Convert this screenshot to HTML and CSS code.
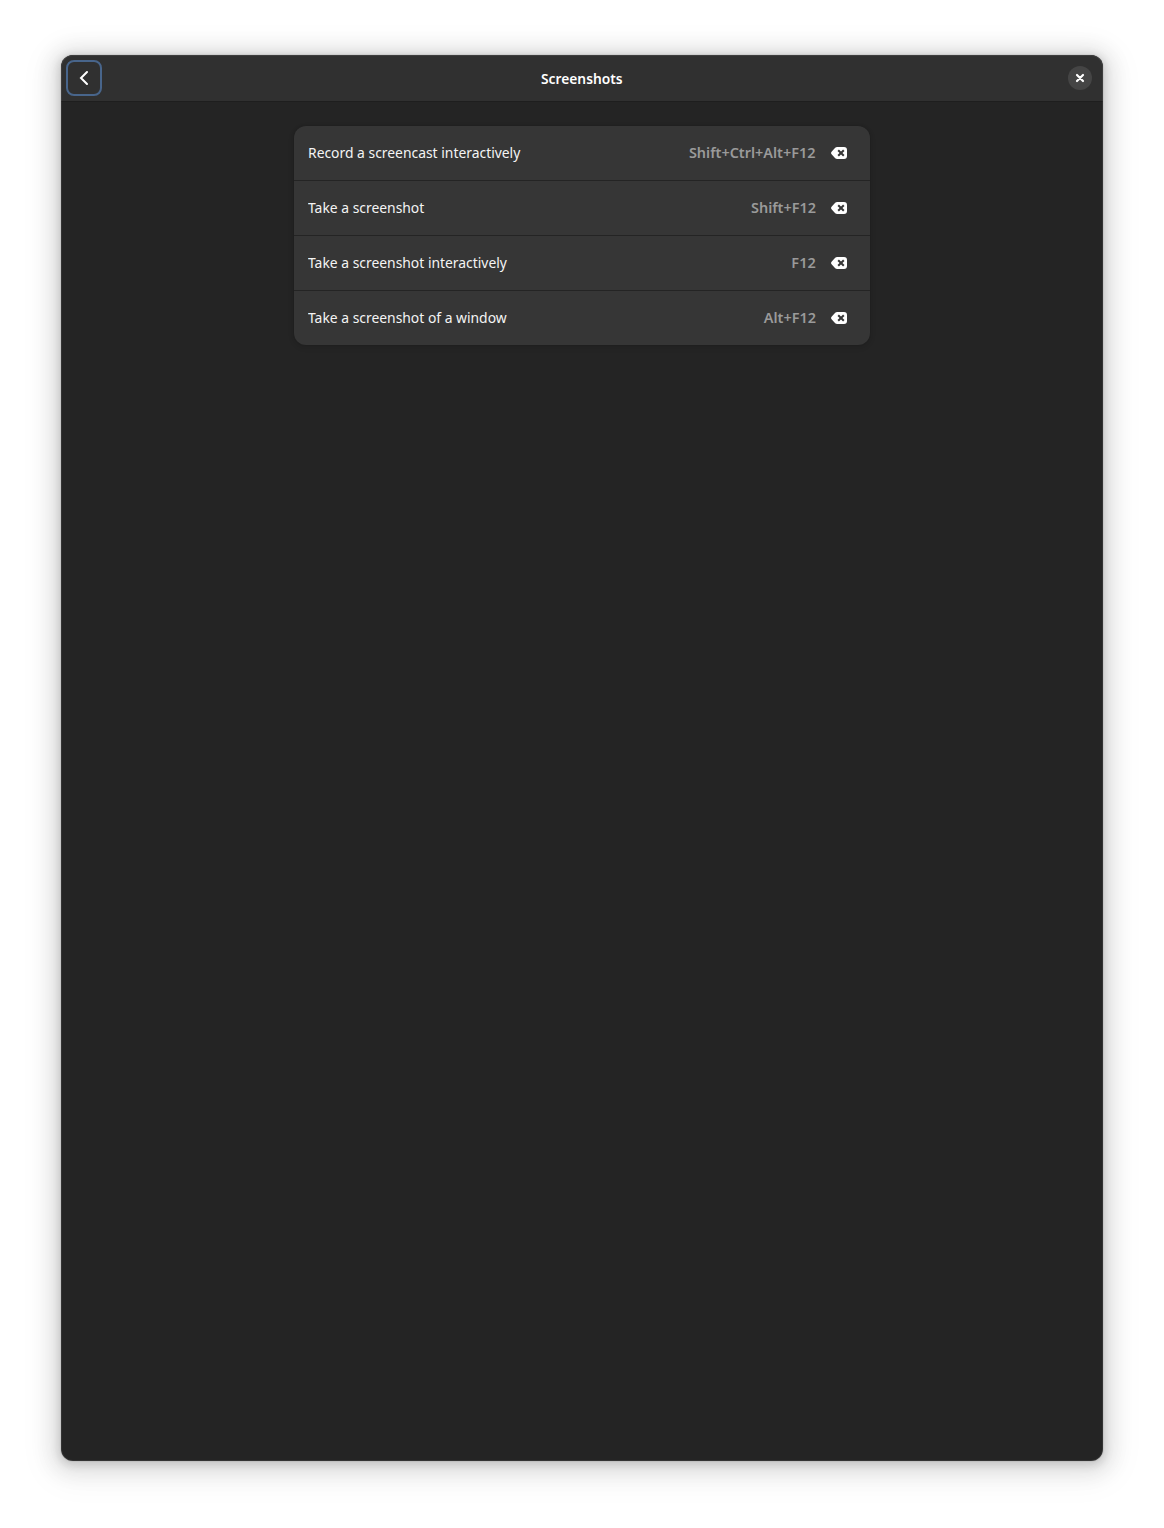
FILE: index.html
```html
<!DOCTYPE html>
<html lang="en">
<head>
<meta charset="utf-8">
<title>Screenshots</title>
<link rel="stylesheet" href="styles.css">
</head>
<body>
<svg class="symbols" width="0" height="0" aria-hidden="true">
  <symbol id="clear" viewBox="0 0 16 16">
    <path fill="#fff" fill-rule="evenodd" d="M6.200 2H13a3 3 0 0 1 3 3v6a3 3 0 0 1-3 3H6.200c-.8 0-1.500-.3-2-.8L.8 9.600C-.2 8.600-.2 7.400.8 6.400l3.400-3.600c.5-.5 1.200-.8 2-.8z"/>
    <path fill="none" stroke="#363636" stroke-width="2" d="M7.200 5.200l5.600 5.600M12.800 5.200l-5.600 5.600"/>
  </symbol>
</svg>
<main class="window">
  <header class="headerbar">
    <button class="back" aria-label="Back">
      <svg width="16" height="16" viewBox="0 0 16 16"><path d="M11 2L5 8l6 6" fill="none" stroke="#fff" stroke-width="2" stroke-linecap="round" stroke-linejoin="miter"/></svg>
    </button>
    <h1 class="title">Screenshots</h1>
    <button class="close" aria-label="Close">
      <svg width="16" height="16" viewBox="0 0 16 16"><path d="M5 5l6 6M11 5l-6 6" fill="none" stroke="#fff" stroke-width="2.200" stroke-linecap="round"/></svg>
    </button>
  </header>
  <ul class="list">
    <li class="row"><span class="name">Record a screencast interactively</span><span class="keys">Shift+Ctrl+Alt+F12</span><svg class="clear"><use href="#clear"/></svg></li>
    <li class="row"><span class="name">Take a screenshot</span><span class="keys">Shift+F12</span><svg class="clear"><use href="#clear"/></svg></li>
    <li class="row"><span class="name">Take a screenshot interactively</span><span class="keys">F12</span><svg class="clear"><use href="#clear"/></svg></li>
    <li class="row"><span class="name">Take a screenshot of a window</span><span class="keys">Alt+F12</span><svg class="clear"><use href="#clear"/></svg></li>
  </ul>
</main>
</body>
</html>
```
FILE: styles.css
```css
* { box-sizing: border-box; }
body {
  margin: 0;
  height: 1528px;
  padding: 55px 61px 67px;
  background: #fff;
  font: 14.667px/20px "Noto Sans", sans-serif;
  color: #fff;
}
.symbols { display: none; }
.window {
  position: relative;
  display: flow-root;
  height: 1406px;
  border-radius: 12px;
  background: #242424;
  box-shadow:
    0 2px 8px 2px rgba(0,0,0,.13),
    0 3px 20px 10px rgba(0,0,0,.09),
    0 6px 32px 16px rgba(0,0,0,.04),
    0 0 0 1px rgba(0,0,0,.05);
}
/* Light edge drawn over the header and the content */
.window::after {
  content: "";
  position: absolute;
  inset: 0;
  border-radius: 12px;
  box-shadow: inset 0 0 0 1px rgba(255,255,255,.07);
  pointer-events: none;
}
.headerbar {
  height: 47px;
  padding: 0 11px 0 5px;
  display: grid;
  grid-template-columns: 36px 1fr 36px;
  align-items: center;
  background: #303030;
  border-bottom: 1px solid #1e1e1e;
  border-radius: 12px 12px 0 0;
}
button { margin: 0; padding: 0; display: grid; place-items: center; color: inherit; }
.back {
  width: 36px;
  height: 36px;
  border: 2px solid #48658b;
  border-radius: 8px;
  background: none;
}
.title {
  margin: 0;
  padding: 0 0 1px 6px;
  text-align: center;
  font-size: 14.667px;
  font-weight: 650;
  transform: scaleX(.94);
}
.close { justify-self: end; width: 24px; height: 24px; border: 0; border-radius: 50%; background: #454545; }
.list {
  width: 576px;
  margin: 24px auto 0;
  padding: 0;
  list-style: none;
  border-radius: 12px;
  background: #363636;
  box-shadow: 0 0 0 1px rgba(0,0,0,.03), 0 1px 3px 1px rgba(0,0,0,.07), 0 2px 6px 2px rgba(0,0,0,.03);
}
.row { height: 55px; padding: 0 23px 0 14px; display: flex; align-items: center; border-bottom: 1px solid #242424; }
.row:last-child { height: 54px; border-bottom: 0; }
.name, .keys { padding-bottom: 2px; }
/* Slightly condensed letterforms */
.name { margin-right: auto; transform: scaleX(.947); transform-origin: left; color: #f4f4f4; }
.keys { margin-right: 15px; transform: scaleX(.985); transform-origin: right; font-weight: 600; color: #9a9a9a; }
.clear { width: 16px; height: 16px; }
```
